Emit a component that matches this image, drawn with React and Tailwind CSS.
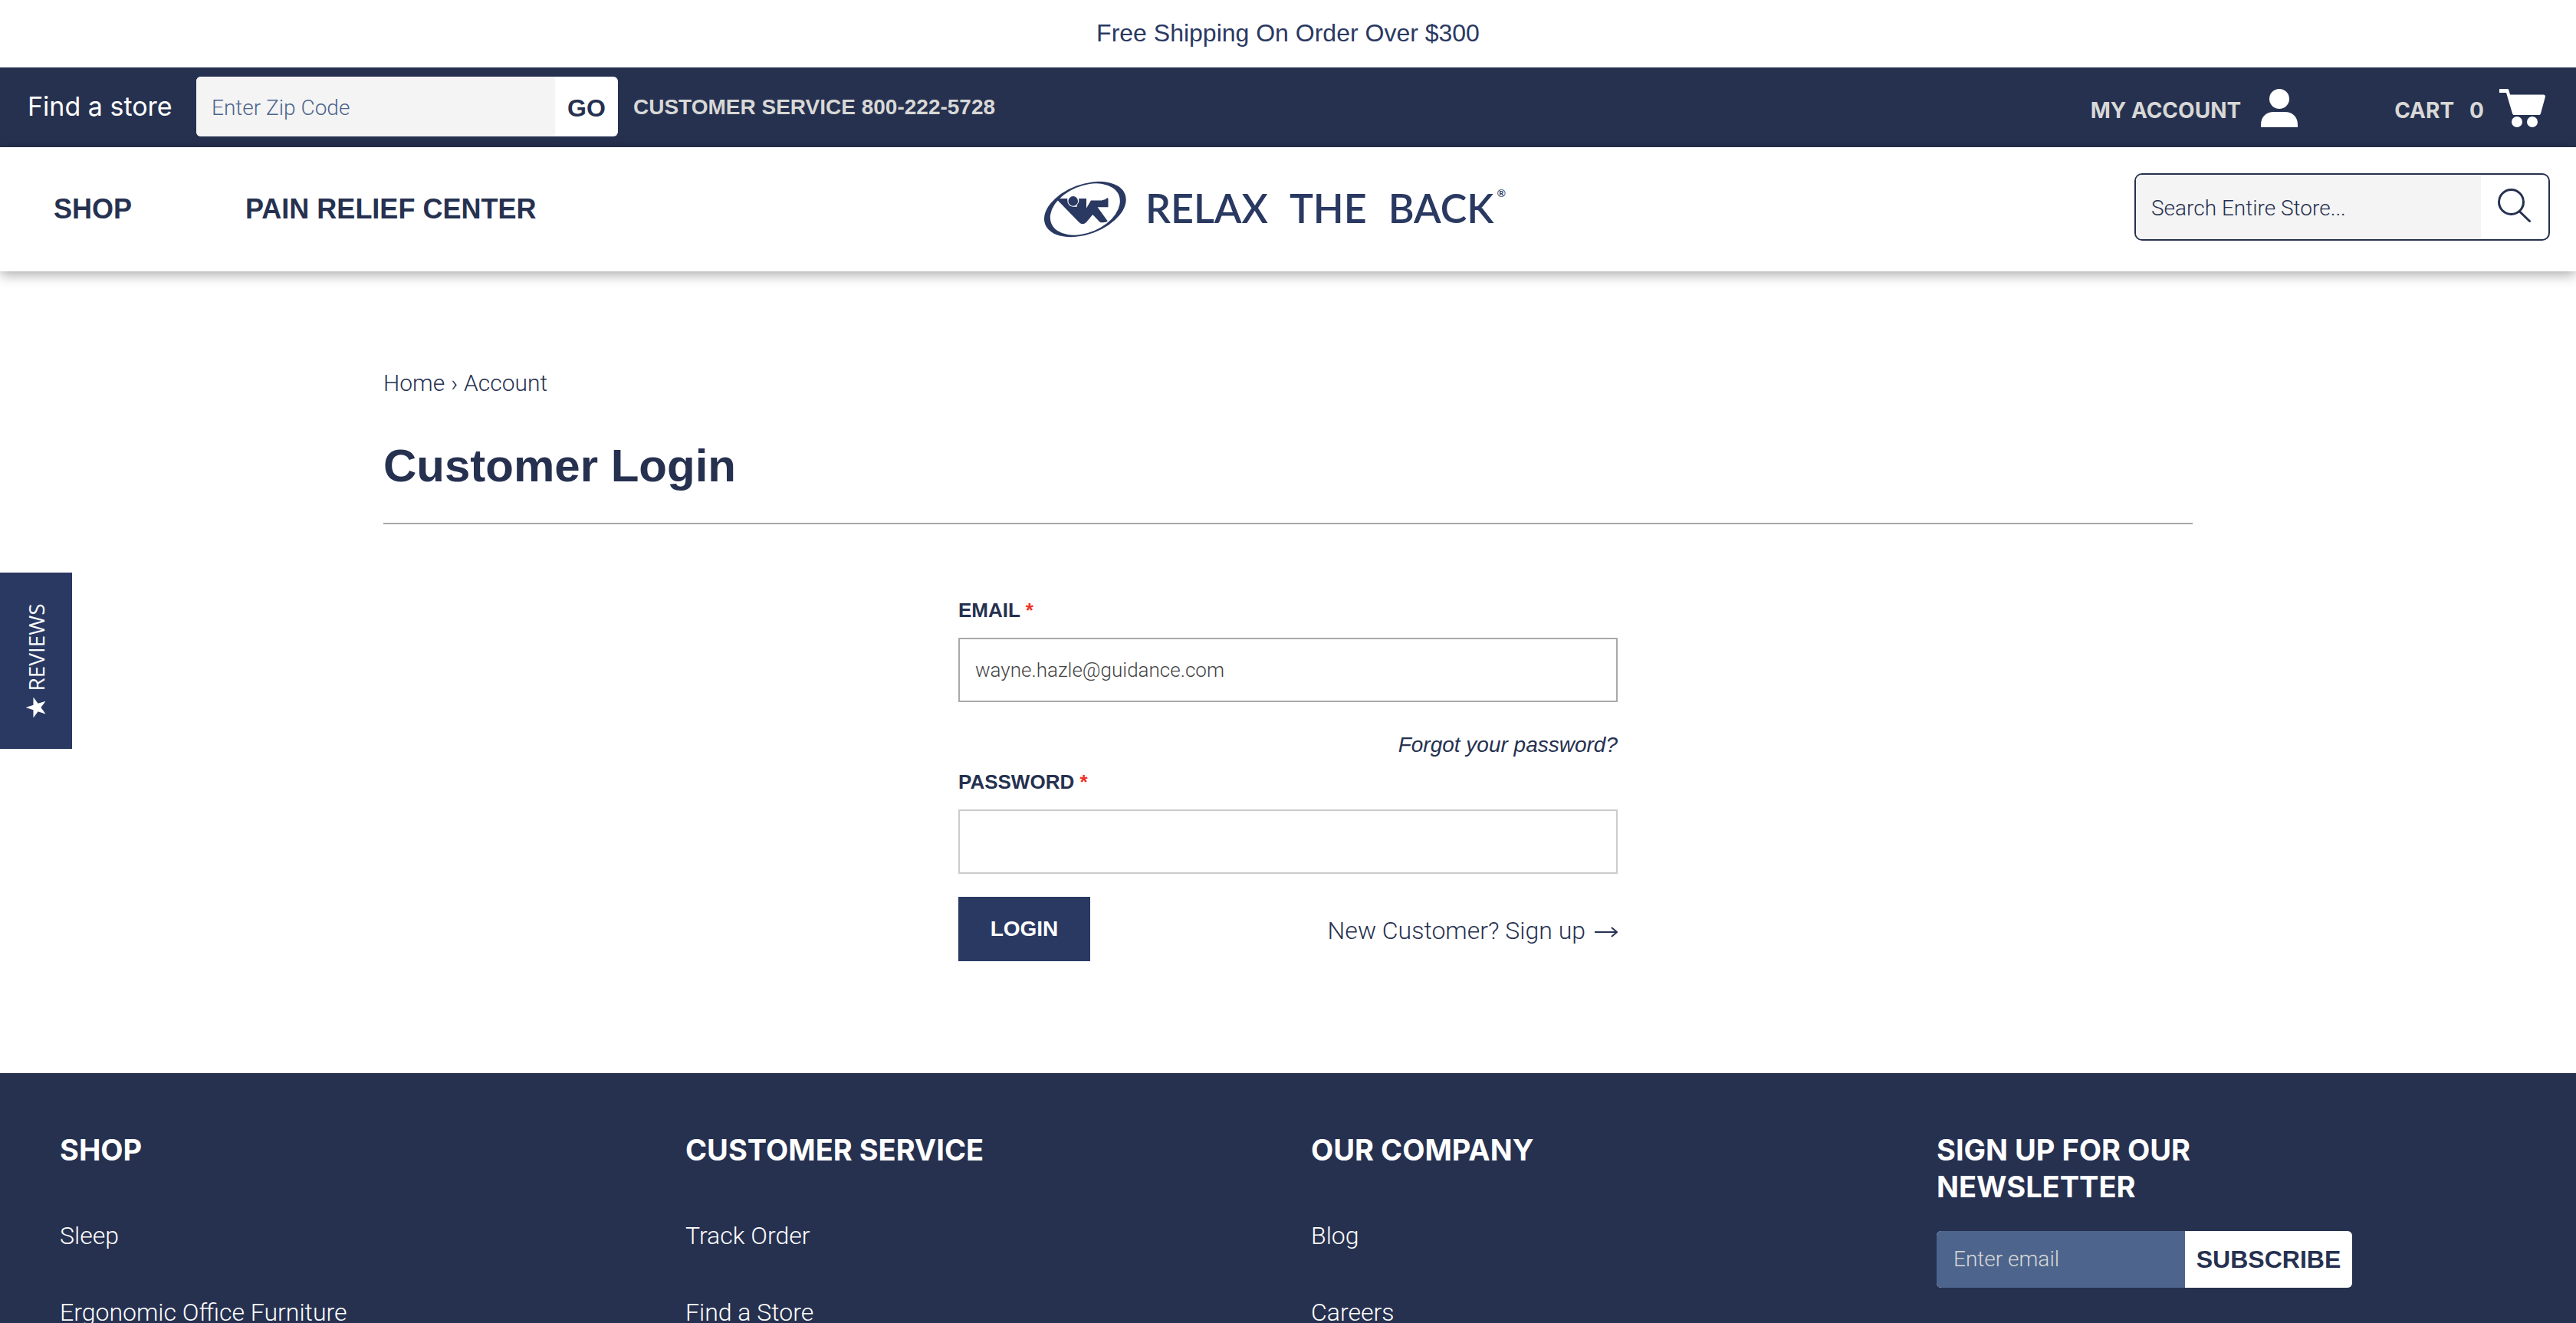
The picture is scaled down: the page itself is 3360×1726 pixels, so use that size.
import React from "react";

const heading = "font-['Inter'] font-bold";
const light = "font-['Roboto'] font-light";

function LogoMark() {
  return (
    <svg viewBox="36 48 332 222" className="h-[74px] w-[110px]" aria-hidden="true">
      <defs>
        <mask id="ring" maskUnits="userSpaceOnUse" x="0" y="0" width="400" height="300">
          <rect x="0" y="0" width="400" height="300" fill="#fff" />
          <ellipse cx="203" cy="159" rx="144" ry="92" transform="rotate(-23 203 159)" fill="#000" />
        </mask>
      </defs>
      <g mask="url(#ring)">
        <ellipse cx="203" cy="159" rx="168" ry="98" transform="rotate(-20.5 203 159)" fill="#2a3962" />
      </g>
      <path
        d="M96 117H208V155L226 124H268Q284 122 290 114L294 117V151H252L292 206Q284 213 262 210L233 180L207 211Q193 223 180 211L94 123Z"
        fill="#2a3962"
      />
      <path d="M133 117Q132 148 156 149H180V117Z" fill="#fff" />
      <circle cx="156" cy="127" r="19" fill="#2a3962" />
      <path d="M179 117H208V152H171V142Q180 134 179 117Z" fill="#2a3962" />
    </svg>
  );
}

function PersonIcon() {
  return (
    <svg viewBox="0 0 48 50" className="h-[50px] w-12" fill="#fff" aria-hidden="true">
      <circle cx="24" cy="13" r="13" />
      <path d="M0 50V47C0 36 7 30 17 30H31C41 30 48 36 48 47V50Z" />
    </svg>
  );
}

function CartIcon() {
  return (
    <svg viewBox="0 0 60 50" className="h-[50px] w-[60px]" fill="#fff" aria-hidden="true">
      <path d="M0 0H11Q12 0 12.500 2L14 7.500H58Q60 7.500 60 10L54 32Q53.500 34 52 34H19Q17.500 34 17 32L9 5H0Z" />
      <circle cx="23" cy="43" r="7" />
      <circle cx="43" cy="43" r="7" />
    </svg>
  );
}

function SearchIcon() {
  return (
    <svg viewBox="0 0 44 44" className="size-11" fill="none" stroke="#263150" strokeWidth="3" strokeLinecap="round" aria-hidden="true">
      <circle cx="17.500" cy="17.500" r="16" />
      <path d="M28.500 30L41.500 42.500" />
    </svg>
  );
}

function StarIcon() {
  return (
    <svg viewBox="0 0 27 26" className="h-[26px] w-[27px]" fill="#fff" aria-hidden="true">
      <path d="M13.500 0L16.700 9.900H27L18.700 16L21.900 26L13.500 19.800L5.100 26L8.300 16L0 9.900H10.300Z" />
    </svg>
  );
}

const columns = [
  { title: "SHOP", links: ["Sleep", "Ergonomic Office Furniture"] },
  { title: "CUSTOMER SERVICE", links: ["Track Order", "Find a Store"] },
  { title: "OUR COMPANY", links: ["Blog", "Careers"] },
];

function TopBar() {
  return (
    <div className="flex h-[104px] items-center bg-[#263150] pr-10 pl-9">
      <label htmlFor="zip" className="mr-[30px] w-[190px] pb-1 font-['Inter'] text-[34px] whitespace-nowrap text-white">
        Find a store
      </label>
      <form className="mb-0.5 flex h-[78px] w-[550px] overflow-hidden rounded-md bg-white">
        <input id="zip" type="text" placeholder="Enter Zip Code" className={"min-w-0 flex-1 bg-[#f4f4f4] px-5 pt-1 text-[28px] text-[#4d658d] outline-none placeholder:text-[#4d658d] " + light} />
        <button type="button" className="w-[82px] pt-1 text-[32px] font-bold">GO</button>
      </form>
      <a href="#" className="ml-5 text-[28px] font-bold whitespace-nowrap text-[#d8d8d6]">CUSTOMER SERVICE 800-222-5728</a>
      <div className={"ml-auto flex items-center pt-0.5 text-[28px] text-[#d8d8d6] " + heading}>
        <a href="#" className="flex items-center gap-[26px]">
          <span className="pt-1.5">MY ACCOUNT</span>
          <PersonIcon />
        </a>
        <a href="#" className="ml-[126px] flex items-center gap-5">
          <span className="pt-1.5">CART</span>
          <span className="pt-1.5">0</span>
          <CartIcon />
        </a>
      </div>
    </div>
  );
}

function Header() {
  return (
    <header className="grid h-[162px] grid-cols-[1fr_auto_1fr] items-center bg-white shadow-[0_4px_16px_rgba(0,0,0,0.35)]">
      <nav className="flex gap-[148px] pl-[70px] text-[36px] font-bold">
        <a href="#">SHOP</a>
        <a href="#">PAIN RELIEF CENTER</a>
      </nav>
      <a href="#" className="mr-9 flex items-center font-['Lato'] text-[52px] leading-none font-semibold text-[#2a3962]">
        <LogoMark />
        <span className="ml-6 pb-1">RELAX</span>
        <span className="ml-7 pb-1">THE</span>
        <span className="ml-7 pb-1">BACK</span>
        <sup className="mt-4 ml-1 self-start text-[14px] leading-none">®</sup>
      </a>
      <form className="mr-[34px] mb-1.5 flex h-[88px] w-[542px] items-stretch justify-self-end overflow-hidden rounded-[10px] border-2 border-[#263150] bg-white">
        <input type="text" aria-label="Search" placeholder="Search Entire Store..." className={"min-w-0 flex-1 bg-[#f4f4f4] px-5 pt-1 text-[28px] outline-none placeholder:text-[#263150] " + light} />
        <button type="button" aria-label="Search" className="flex w-[88px] items-center justify-center pb-1">
          <SearchIcon />
        </button>
      </form>
    </header>
  );
}

function Login() {
  return (
    <form className="mx-auto flex w-[860px] flex-col">
      <label htmlFor="email" className="text-[26px] leading-8 font-bold">
        EMAIL <span className="text-[#ef3326]">*</span>
      </label>
      <input id="email" type="text" defaultValue="wayne.hazle@guidance.com" className={"mt-5 h-[84px] border-2 border-[#a9a9a9] px-5 text-[26px] text-[#444] outline-none " + light} />
      <a href="#" className="mt-9 self-end text-[28px] leading-10 italic">Forgot your password?</a>
      <label htmlFor="password" className="mt-3 text-[26px] leading-8 font-bold">
        PASSWORD <span className="text-[#ef3326]">*</span>
      </label>
      <input id="password" type="password" className="mt-5 h-[84px] border-2 border-[#ccc] px-5 text-[26px] outline-none" />
      <div className="mt-[30px] flex items-center justify-between">
        <button type="button" className="h-[84px] w-[172px] bg-[#2a3962] text-[28px] font-bold text-white">LOGIN</button>
        <a href="#" className={"flex items-center gap-3 pt-1 text-[32px] " + light}>
          New Customer? Sign up
          <svg viewBox="0 0 30 20" className="mt-1 h-5 w-[30px]" fill="none" stroke="#263150" strokeWidth="2" aria-hidden="true">
            <path d="M0 10H28M22 4L29 10L22 16" />
          </svg>
        </a>
      </div>
    </form>
  );
}

function Footer() {
  return (
    <footer className="grid shrink-0 grid-cols-4 bg-[#263150] pt-[76px] pr-[18px] pl-[78px] text-white">
      {columns.map((column) => (
        <section key={column.title}>
          <h2 className={"text-[38px] leading-[48px] " + heading}>{column.title}</h2>
          <ul className={"mt-[64px] flex flex-col gap-[52px] text-[32px] leading-[48px] " + light}>
            {column.links.map((link) => (
              <li key={link}><a href="#">{link}</a></li>
            ))}
          </ul>
        </section>
      ))}
      <section>
        <h2 className={"w-[400px] text-[38px] leading-[48px] " + heading}>SIGN UP FOR OUR NEWSLETTER</h2>
        <form className="mt-[34px] flex h-[74px] w-[542px] overflow-hidden rounded-md bg-white">
          <input type="text" aria-label="Email address" placeholder="Enter email" className={"min-w-0 flex-1 bg-[#4d658d] px-[22px] text-[28px] text-white outline-none placeholder:text-[#d8d8d6] " + light} />
          <button type="button" className="w-[218px] text-[32px] font-bold text-[#263150]">SUBSCRIBE</button>
        </form>
      </section>
    </footer>
  );
}

export default function App() {
  return (
    <div className="relative flex h-screen flex-col overflow-hidden bg-white font-['Liberation_Sans',sans-serif] text-[#263150]">
      <div className="relative z-10 shrink-0">
        <p className="h-[88px] bg-white text-center text-[32px] leading-[86px] text-[#2a3962]">Free Shipping On Order Over $300</p>
        <TopBar />
        <Header />
      </div>
      <main className="shrink-0 px-[500px] pt-[126px] pb-[146px]">
        <nav className={"flex gap-2 text-[30px] leading-10 " + light}>
          <a href="#">Home</a>
          <span>›</span>
          <a href="#">Account</a>
        </nav>
        <h1 className="mt-12 mb-24 border-b-2 border-[#a9a9a9] pb-[34px] text-[60px] leading-[80px] font-bold">Customer Login</h1>
        <Login />
      </main>
      <Footer />
      <button type="button" className="absolute top-[747px] left-0 flex h-[230px] w-[94px] items-center justify-center bg-[#2a3962] font-['Open_Sans'] text-[28px] text-white">
        <span className="flex -rotate-90 items-center gap-2">
          <StarIcon />
          REVIEWS
        </span>
      </button>
    </div>
  );
}
